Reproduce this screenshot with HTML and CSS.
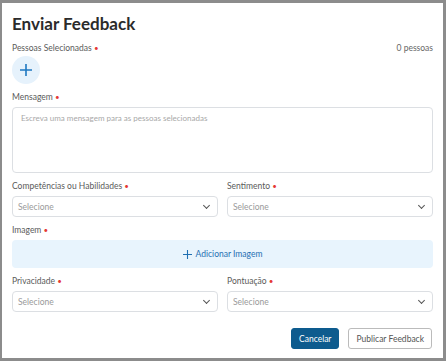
FILE: index.html
```html
<!DOCTYPE html>
<html lang="pt-BR">
<head>
  <meta charset="UTF-8">
  <title>Enviar Feedback</title>
  <link rel="stylesheet" href="styles.css">
</head>
<body>
  <div class="modal">
    <h2>Enviar Feedback</h2>

    <div class="row-between">
      <label>Pessoas Selecionadas <span class="req">•</span></label>
      <span class="count">0 pessoas</span>
    </div>
    <button class="add-person" type="button">
      <svg width="14" height="14" viewBox="0 0 14 14"><path d="M7 1v12M1 7h12" stroke="#1f78c1" stroke-width="1.6" fill="none"/></svg>
    </button>

    <div class="field">
      <label>Mensagem <span class="req">•</span></label>
      <div class="textarea">Escreva uma mensagem para as pessoas selecionadas</div>
    </div>

    <div class="grid">
      <div class="field">
        <label>Competências ou Habilidades <span class="req">•</span></label>
        <div class="select">Selecione <span class="chev"></span></div>
      </div>
      <div class="field">
        <label>Sentimento <span class="req">•</span></label>
        <div class="select">Selecione <span class="chev"></span></div>
      </div>
    </div>

    <div class="field">
      <label>Imagem <span class="req">•</span></label>
      <div class="upload">
        <svg width="9" height="9" viewBox="0 0 10 10"><path d="M5 0v10M0 5h10" stroke="#1f6fb2" stroke-width="1.2" fill="none"/></svg>
        Adicionar Imagem
      </div>
    </div>

    <div class="grid">
      <div class="field">
        <label>Privacidade <span class="req">•</span></label>
        <div class="select">Selecione <span class="chev"></span></div>
      </div>
      <div class="field">
        <label>Pontuação <span class="req">•</span></label>
        <div class="select">Selecione <span class="chev"></span></div>
      </div>
    </div>

    <div class="actions">
      <button class="btn btn-primary" type="button">Cancelar</button>
      <button class="btn btn-outline" type="button">Publicar Feedback</button>
    </div>
  </div>
</body>
</html>
```

FILE: styles.css
```css
body {
  margin: 0;
  background-color: #8c8c8c;
  font-family: Lato, "Noto Sans", sans-serif;
  color: #555;
  height: 361px;
  box-sizing: border-box;
  padding: 3px 3px 3px 2px;
}

.modal {
  background-color: white;
  height: 355px;
  box-sizing: border-box;
  padding: 10px 10px 0 10px;
}

h2 {
  margin: 0 0 8px;
  font-size: 17px;
  line-height: 22px;
  font-weight: 700;
  color: #2b2b2b;
}

label {
  display: block;
  font-size: 8.5px;
  line-height: 11px;
  color: #5a5a5a;
  margin-bottom: 4px;
}

.req {
  color: #e53935;
  font-size: 8px;
}

.row-between {
  display: flex;
  justify-content: space-between;
  align-items: center;
  margin-bottom: -2px;
}

.count {
  font-size: 8.5px;
  line-height: 11px;
  color: #666;
  margin-bottom: 4px;
}

.add-person {
  width: 28px;
  height: 28px;
  border-radius: 50%;
  border: none;
  background-color: #e6f2fc;
  display: flex;
  align-items: center;
  justify-content: center;
  padding: 0;
  margin-bottom: 8px;
}

.field {
  margin-bottom: 8px;
}

.textarea {
  height: 66px;
  box-sizing: border-box;
  border: 1px solid #dcdfe3;
  border-radius: 4px;
  padding: 5px 8px;
  font-size: 8px;
  color: #a8a8a8;
}

.grid {
  display: grid;
  grid-template-columns: 1fr 1fr;
  gap: 9px;
}

.select {
  height: 21px;
  box-sizing: border-box;
  border: 1px solid #dcdfe3;
  border-radius: 4px;
  padding: 0 8px 0 5px;
  font-size: 8.5px;
  color: #9a9a9a;
  display: flex;
  align-items: center;
  justify-content: space-between;
}

.chev {
  width: 4px;
  height: 4px;
  border-right: 1.4px solid #555;
  border-bottom: 1.4px solid #555;
  transform: rotate(45deg);
  margin-top: -3px;
}

.upload {
  height: 28px;
  background-color: #e8f4fd;
  border-radius: 4px;
  display: flex;
  align-items: center;
  justify-content: center;
  gap: 4px;
  font-size: 8.5px;
  color: #1f6fb2;
}

.actions {
  display: flex;
  justify-content: flex-end;
  gap: 9px;
  margin-top: 8px;
  padding-right: 1px;
}

.btn {
  height: 21px;
  font-family: inherit;
  font-size: 8.5px;
  border-radius: 3px;
  padding: 0 7px;
  cursor: pointer;
}

.btn-primary {
  background-color: #0d5b8e;
  color: white;
  border: 1px solid #0d5b8e;
}

.btn-outline {
  background-color: white;
  color: #555;
  border: 1px solid #bbb;
}
```
